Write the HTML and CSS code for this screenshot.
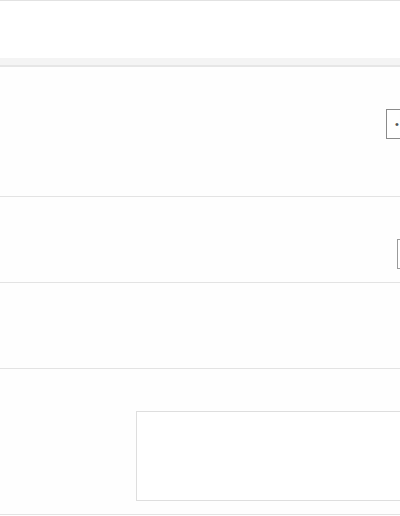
FILE: index.html
```html
<!DOCTYPE html>
<html>
<head>
<meta charset="utf-8">
<link rel="stylesheet" href="styles.css">
</head>
<body>
<div class="page">
  <header class="top"></header>
  <div class="band"></div>
  <section class="row row-a">
    <div class="ctl ctl-a"><span class="glyph">•</span></div>
  </section>
  <section class="row row-b">
    <div class="ctl ctl-b"></div>
  </section>
  <section class="row row-c"></section>
  <section class="row row-d">
    <div class="area"></div>
  </section>
</div>
</body>
</html>
```

FILE: styles.css
```css
html, body {
  margin: 0;
  padding: 0;
  background: #ffffff;
  font-family: "Liberation Sans", Arial, sans-serif;
  overflow: hidden;
}
.page {
  width: 400px;
  height: 516px;
  overflow: hidden;
  display: flex;
  flex-direction: column;
}
.top {
  height: 57px;
  border-top: 1px solid #e2e2e2;
  background: #ffffff;
  flex: none;
}
.band {
  height: 7px;
  background: #f4f4f4;
  border-bottom: 2px solid #e6e6e6;
  flex: none;
}
.row {
  flex: none;
  border-bottom: 1px solid #e3e3e3;
  background: #fefefe;
  display: flex;
  overflow: hidden;
}
.row-a {
  height: 130px;
  align-items: flex-start;
  padding-top: 42px;
  box-sizing: border-box;
  padding-left: 386px;
}
.row-b {
  height: 86px;
  box-sizing: border-box;
  padding-top: 42px;
  padding-left: 397px;
}
.row-c {
  height: 85px;
}
.row-d {
  height: 146px;
  box-sizing: border-box;
  padding-top: 42px;
  padding-left: 136px;
}
.ctl {
  flex: none;
  box-sizing: border-box;
  border: 1px solid #8a8a8a;
  border-right: none;
  background: #ffffff;
}
.ctl-a {
  width: 30px;
  height: 30px;
  display: flex;
  align-items: center;
  padding-left: 8px;
}
.glyph {
  font-size: 11px;
  color: #555555;
  line-height: 1;
}
.ctl-b {
  width: 20px;
  height: 30px;
  border-color: #9a9a9a;
}
.area {
  flex: none;
  width: 300px;
  height: 90px;
  box-sizing: border-box;
  border: 1px solid #dedede;
  border-right: none;
  background: #ffffff;
}
```
